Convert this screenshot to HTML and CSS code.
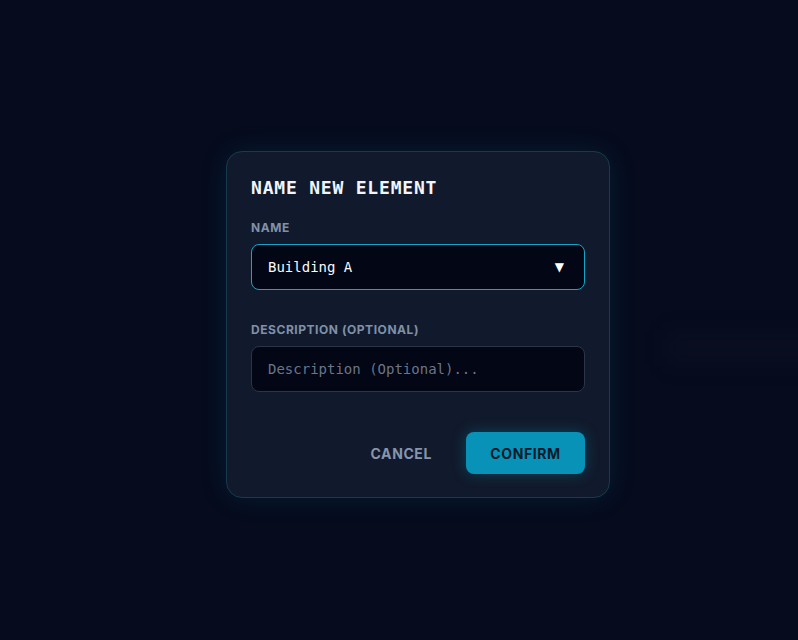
FILE: index.html
```html
<!DOCTYPE html>
<html lang="en">
<head>
<meta charset="utf-8">
<title>Name New Element</title>
<link rel="stylesheet" href="styles.css">
</head>
<body>
<div class="backdrop">
  <div class="ghost"></div>
  <div class="dialog">
    <h2 class="title">NAME NEW ELEMENT</h2>
    <div class="field">
      <label class="label">NAME</label>
      <div class="select">
        <span class="select-value">Building A</span>
        <span class="caret">▼</span>
      </div>
    </div>
    <div class="field">
      <label class="label">DESCRIPTION (OPTIONAL)</label>
      <div class="input"><span class="placeholder">Description (Optional)...</span></div>
    </div>
    <div class="actions">
      <button class="btn btn-cancel">CANCEL</button>
      <button class="btn btn-confirm">CONFIRM</button>
    </div>
  </div>
</div>
</body>
</html>
```

FILE: styles.css
```css
* { box-sizing: border-box; }
html, body {
  margin: 0;
  padding: 0;
  width: 798px;
  height: 640px;
  background: #060b1d;
  overflow: hidden;
}
.backdrop {
  width: 798px;
  height: 640px;
  display: flex;
  justify-content: center;
  padding-top: 151px;
  padding-left: 38px;
  position: relative;
}
.ghost {
  position: absolute;
  left: 665px;
  top: 330px;
  width: 160px;
  height: 36px;
  background: rgba(30, 35, 60, 0.12);
  filter: blur(10px);
}
.dialog {
  width: 384px;
  height: 347px;
  background: #111a2c;
  border: 1px solid #173a4e;
  border-radius: 16px;
  padding: 24px;
  box-shadow: 0 0 28px rgba(8, 145, 178, 0.14);
  display: flex;
  flex-direction: column;
  position: relative;
}
.title {
  margin: 0 0 20px;
  font-family: "DejaVu Sans Mono", monospace;
  font-weight: bold;
  font-size: 18px;
  line-height: 24px;
  letter-spacing: 0.8px;
  color: #f1f5f9;
}
.field {
  display: flex;
  flex-direction: column;
}
.field + .field { margin-top: 32px; }
.label {
  font-family: Inter, "Noto Sans", sans-serif;
  font-weight: 700;
  font-size: 12px;
  line-height: 16px;
  letter-spacing: 0.55px;
  color: #8090a8;
  margin-bottom: 8px;
}
.select, .input {
  height: 46px;
  border-radius: 8px;
  background: #020615;
  display: flex;
  align-items: center;
  padding: 0 16px;
  font-family: "DejaVu Sans Mono", monospace;
  font-size: 14px;
}
.select {
  border: 1px solid #12a7c9;
  justify-content: space-between;
  color: #f8fafc;
}
.select-value { font-weight: 500; }
.caret {
  font-family: "DejaVu Sans", sans-serif;
  font-size: 12px;
  color: #ffffff;
  margin-right: 4px;
}
.input {
  border: 1px solid #2a3648;
}
.placeholder { color: #6b7587; }
.actions {
  margin-top: 40px;
  display: flex;
  justify-content: flex-end;
  align-items: center;
  gap: 14px;
}
.btn {
  font-family: Inter, "Noto Sans", sans-serif;
  font-weight: 700;
  font-size: 14px;
  letter-spacing: 0.6px;
  border: none;
  cursor: pointer;
  height: 42px;
  border-radius: 8px;
}
.btn-cancel {
  background: transparent;
  color: #8795ac;
  padding: 0 20px;
}
.btn-confirm {
  background: #0892b8;
  color: #0c1a2a;
  padding: 0 24px;
  width: 119px;
  box-shadow: 0 0 14px rgba(8, 145, 178, 0.35);
}
```
